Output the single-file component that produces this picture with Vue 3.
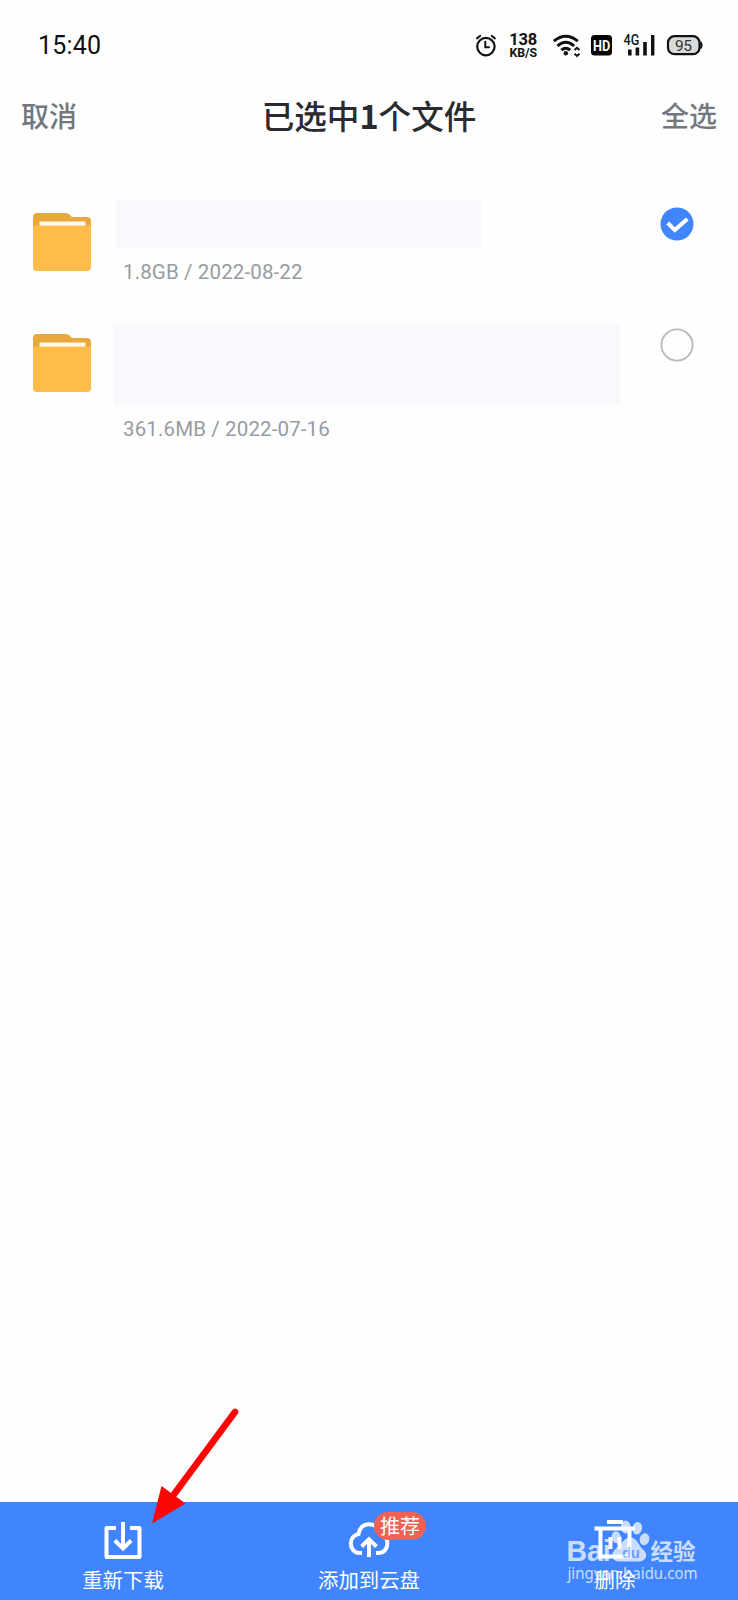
<script setup>
const files = [
  { id: 'first', meta: '1.8GB / 2022-08-22', checked: true },
  { id: 'second', meta: '361.6MB / 2022-07-16', checked: false },
]
</script>

<template>
  <div class="screen">
    <header class="status">
      <span class="time">15:40</span>
      <svg class="status-icons" width="238" height="40" viewBox="0 0 238 40">
        <g fill="none" stroke="#111" stroke-width="2.2" stroke-linecap="round">
          <circle cx="15.9" cy="21.6" r="8.7" />
          <path d="M15.3 16.8V22.3H19M7 13.4L10.2 10.8M24.8 13.4L21.6 10.8" stroke-width="2" />
        </g>
        <g class="bold">
          <text x="39.2" y="20.3" font-size="16.5" textLength="28">138</text>
          <text x="39.6" y="32.3" font-size="12.3" textLength="27.5">KB/S</text>
        </g>
        <g fill="none" stroke="#111" stroke-width="3">
          <path d="M83.8 16.2Q95.8 6.2 107.8 16.2M87.5 21Q95.8 13.6 104.1 21M91.3 25.2Q95.8 21.2 100.3 25.2" />
          <path d="M104.5 25L107 22.8L109.5 25M104.5 28.8L107 31L109.5 28.8" stroke-width="1.9" />
        </g>
        <circle cx="95.8" cy="28.2" r="2.2" />
        <rect x="121" y="10" width="21" height="20.5" rx="3.5" fill="#050505" />
        <text class="bold" x="123" y="26" font-size="15.5" fill="#fff" textLength="17.2" lengthAdjust="spacingAndGlyphs">HD</text>
        <text class="network" x="153.6" y="20.4" font-size="14" textLength="15.8" lengthAdjust="spacingAndGlyphs">4G</text>
        <path d="M158 24.5h3.6v6H158zM165.6 22.5h3.6v8h-3.6zM173.2 17h3.6v13.5h-3.6zM181 10h3.4v20.5H181z" />
        <rect x="198" y="11.2" width="31.5" height="18" rx="6.5" fill="#dadada" stroke="#111" stroke-width="2.2" />
        <path d="M230.2 16.2q2.3 .5 2.3 4t-2.3 4z" />
        <text class="charge" x="205" y="25.8" font-size="15.5" textLength="17">95</text>
      </svg>
    </header>

    <nav class="titlebar">
      <span class="action">取消</span>
      <h1>已选中<b>1</b>个文件</h1>
      <span class="action">全选</span>
    </nav>

    <main>
      <section v-for="file in files" :key="file.id" class="row" :class="file.id">
        <svg class="folder" width="58" height="58" viewBox="0 0 58 58">
          <path d="M4 0H33Q35 0 36.5 1.5L39 4H54Q58 4 58 8V20H0V4Q0 0 4 0Z" fill="#e9a83b" />
          <path d="M0 12.5H58V54Q58 58 54 58H4Q0 58 0 54Z" fill="#ffbc49" />
          <rect x="6.5" y="8.5" width="46" height="4.2" fill="#fff9e8" />
        </svg>
        <div class="info">
          <div class="name"></div>
          <div class="meta">{{ file.meta }}</div>
        </div>
        <svg class="check" width="34" height="34" viewBox="0 0 34 34">
          <template v-if="file.checked">
            <circle cx="17" cy="17" r="16.5" fill="#4085fc" />
            <path d="M7.8 16L14.8 23.1L27.3 12" fill="none" stroke="#fff" stroke-width="4" />
          </template>
          <circle v-else cx="17" cy="17" r="15.6" fill="none" stroke="#b8bbc1" stroke-width="1.9" />
        </svg>
      </section>
    </main>

    <footer class="toolbar">
      <div class="tool">
        <svg width="44" height="44" viewBox="0 0 44 44" fill="none" stroke="#fff" stroke-width="4">
          <path d="M15 8H5.5V37H38.5V8H29" stroke-linejoin="round" />
          <path d="M22 2V28M13.8 20.5L22 28.5L30.2 20.5" />
        </svg>
        <span>重新下载</span>
      </div>
      <div class="tool">
        <div class="icon-wrap">
          <svg width="44" height="44" viewBox="0 0 44 44" fill="none" stroke="#fff" stroke-width="4">
            <path d="M15 33H12.5C7 33 3.8 28 3.8 23.5C3.8 18.5 7 15 11.5 14C12.5 7.8 16.5 4.2 22 4.2C27.5 4.2 32 8 33 14C37.5 15 40.4 19 40.4 23.5C40.4 28.5 37 33 31.5 33H29" />
            <path d="M22 37V20M14.6 26.5L22 19.2L29.4 26.5" />
          </svg>
          <span class="badge">推荐</span>
        </div>
        <span>添加到云盘</span>
      </div>
      <div class="tool">
        <svg width="44" height="44" viewBox="0 0 44 44" fill="none" stroke="#fff" stroke-width="4">
          <path d="M14 2H30M1.5 8.5H42M7.5 8.5V36.5H36.5V8.5M17.5 17V29M26.5 17V29" />
        </svg>
        <span>删除</span>
      </div>
    </footer>

    <svg class="watermark" width="140" height="78" viewBox="0 0 140 78">
      <g class="brand">
        <text x="4.5" y="51" font-size="29" textLength="44" lengthAdjust="spacingAndGlyphs">Bai</text>
        <ellipse cx="54.3" cy="27.3" rx="4.6" ry="6" transform="rotate(-12 54.3 27.3)" />
        <ellipse cx="63.7" cy="17" rx="4.8" ry="6.4" />
        <ellipse cx="75.3" cy="18.3" rx="4.7" ry="6.3" transform="rotate(12 75.3 18.3)" />
        <ellipse cx="82.5" cy="29.3" rx="4.8" ry="6" transform="rotate(15 82.5 29.3)" />
        <path d="M68.5 27.5C75 27.5 77 36 81 39.5C87 44 84 51.5 77 51.5H58C49 51.5 48 43.5 54 38.5C60 34 62 27.5 68.5 27.5Z" />
      </g>
      <text class="du" x="60" y="48" font-size="15" textLength="18">du</text>
      <text class="cjk" x="88.5" y="50" font-size="22.5" textLength="45">经验</text>
      <text class="url" x="5.5" y="69" font-size="17" textLength="130" lengthAdjust="spacingAndGlyphs">jingyan.baidu.com</text>
    </svg>

    <svg class="pointer" width="100" height="130" viewBox="0 0 100 130">
      <path d="M90 12L27 97" stroke="#fb0505" stroke-width="6.6" stroke-linecap="round" />
      <path d="M7 123.5L16.5 86L40.5 103.5Z" fill="#fb0505" />
    </svg>
  </div>
</template>

<style>
body {
  margin: 0;
  background: #fefefe;
}
</style>

<style scoped>
.screen {
  position: relative;
  display: flex;
  flex-direction: column;
  width: 738px;
  height: 1600px;
  overflow: hidden;
  background: #fefefe;
  font-family: Roboto, "Noto Sans CJK SC", sans-serif;
}
.status {
  display: flex;
  justify-content: space-between;
  height: 79px;
  padding: 25px 30px 0 38px;
  box-sizing: border-box;
}
.time {
  padding-top: 1px;
  font-size: 25px;
  line-height: 40px;
  letter-spacing: 0.2px;
  color: #111;
}
.status-icons {
  display: block;
  font-family: Roboto, sans-serif;
  fill: #111;
}
.bold { font-weight: 700; }
.network { font-weight: 500; }
.charge { font-weight: 400; fill: #333; }
.titlebar {
  display: flex;
  align-items: center;
  justify-content: space-between;
  height: 72px;
  padding: 0 21px;
}
.action {
  font-size: 28px;
  font-weight: 500;
  color: #73787f;
}
h1 {
  margin: -2px 0 0;
  font-size: 32.6px;
  font-weight: 500;
  color: #292b30;
}
h1 b { font-family: "Noto Sans CJK SC", sans-serif; }
main { flex: 1; padding-top: 49px; }
.row {
  display: flex;
  align-items: flex-start;
}
.first { height: 124.5px; }
.folder { margin: 13px 0 0 32.5px; }
.second .folder { margin-top: 9.5px; }
.info { flex: 1; margin-left: 25.5px; }
.second .info { margin-left: 23.5px; }
.name {
  width: 366px;
  height: 48px;
  background: #f7f9fd;
}
.second .name {
  width: 506px;
  height: 80px;
}
.meta {
  margin: 9px 0 0 7px;
  font-size: 20.5px;
  line-height: 30px;
  letter-spacing: 0.13px;
  color: #979ba2;
}
.second .meta { margin: 9.5px 0 0 9px; }
.check { margin: 6.5px 44.5px 0 0; }
.second .check { margin-top: 3px; }
.toolbar {
  display: grid;
  grid-template-columns: repeat(3, 1fr);
  height: 98px;
  background: #4085fe;
}
.tool {
  display: flex;
  flex-direction: column;
  align-items: center;
  padding-top: 18px;
  font-size: 20.4px;
  line-height: 30px;
  color: #fff;
}
.tool svg { display: block; margin-bottom: 2px; }
.icon-wrap { position: relative; }
.badge {
  position: absolute;
  top: -8px;
  left: 27px;
  width: 52px;
  height: 28px;
  border-radius: 14px;
  background: #ef6155;
  font-size: 20px;
  line-height: 30px;
  text-align: center;
}
.watermark {
  position: absolute;
  left: 562px;
  top: 1510px;
  fill: #fff;
  opacity: 0.72;
}
.brand { font-family: "Liberation Sans", sans-serif; font-weight: 700; }
.du { font-family: "Liberation Sans", sans-serif; font-weight: 700; fill: #7fabf7; }
.cjk { font-family: "Noto Sans CJK SC", sans-serif; font-weight: 700; }
.url { font-family: "Noto Sans", sans-serif; }
.pointer {
  position: absolute;
  left: 145px;
  top: 1400px;
}
</style>
